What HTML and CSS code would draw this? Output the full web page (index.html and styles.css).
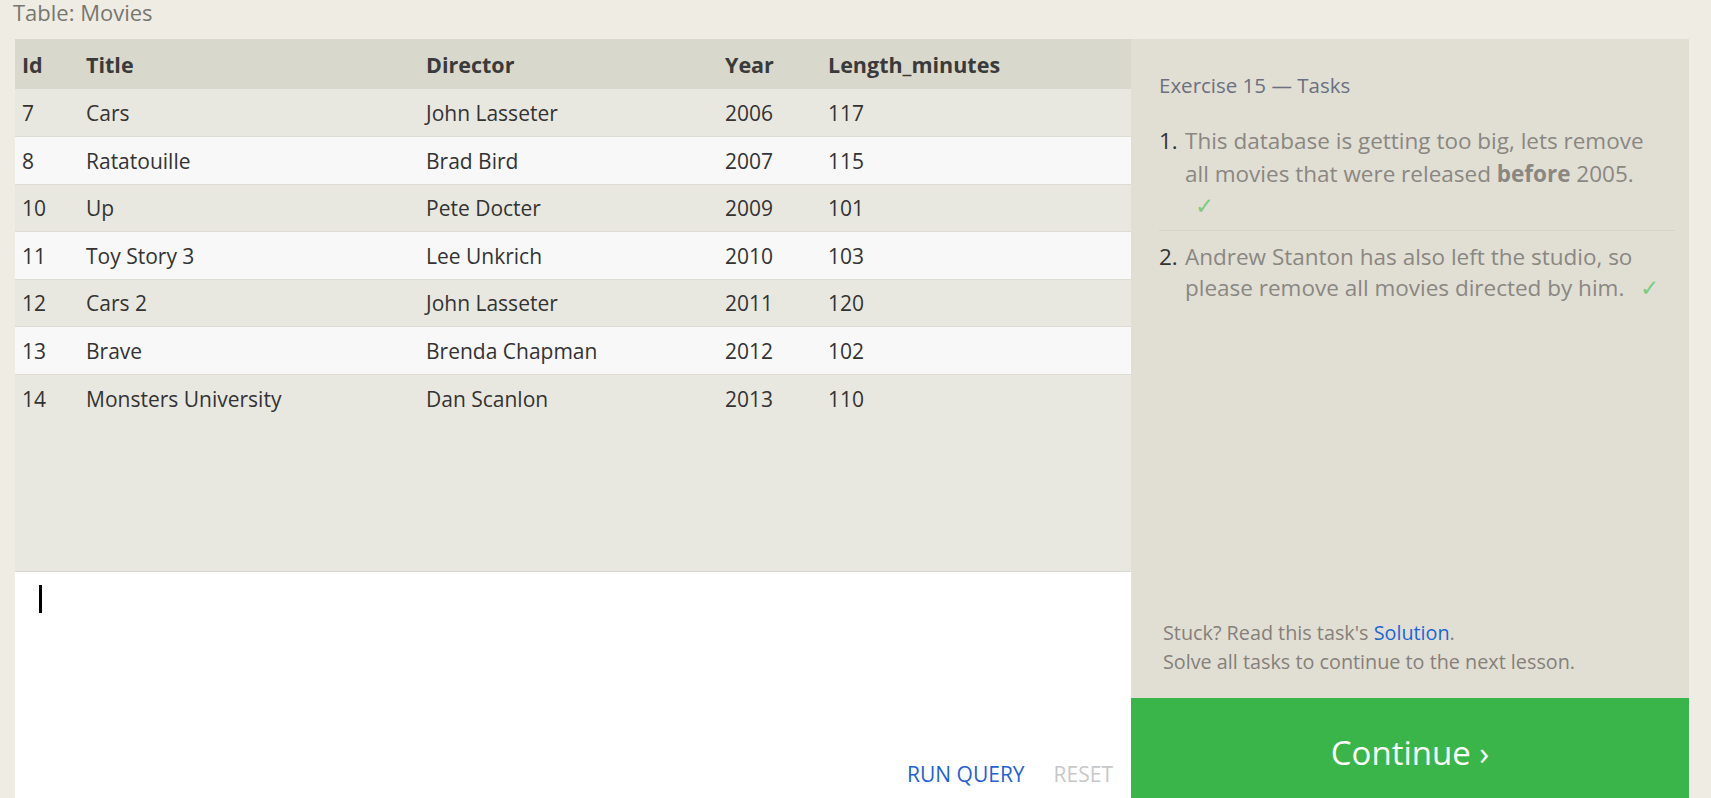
FILE: index.html
```html
<!DOCTYPE html>
<html>
<head>
<meta charset="utf-8">
<link rel="stylesheet" href="styles.css">
</head>
<body>
<div class="caption">Table: Movies</div>
<div class="workspace">
  <div class="left">
    <div class="results">
      <table class="grid">
        <thead>
          <tr><th class="c-id">Id</th><th class="c-title">Title</th><th class="c-dir">Director</th><th class="c-year">Year</th><th>Length_minutes</th></tr>
        </thead>
        <tbody>
          <tr><td>7</td><td>Cars</td><td>John Lasseter</td><td>2006</td><td>117</td></tr>
          <tr><td>8</td><td>Ratatouille</td><td>Brad Bird</td><td>2007</td><td>115</td></tr>
          <tr><td>10</td><td>Up</td><td>Pete Docter</td><td>2009</td><td>101</td></tr>
          <tr><td>11</td><td>Toy Story 3</td><td>Lee Unkrich</td><td>2010</td><td>103</td></tr>
          <tr><td>12</td><td>Cars 2</td><td>John Lasseter</td><td>2011</td><td>120</td></tr>
          <tr><td>13</td><td>Brave</td><td>Brenda Chapman</td><td>2012</td><td>102</td></tr>
          <tr><td>14</td><td>Monsters University</td><td>Dan Scanlon</td><td>2013</td><td>110</td></tr>
        </tbody>
      </table>
    </div>
    <div class="editor">
      <div class="code"><span class="cursor"></span></div>
      <div class="actions">
        <span class="run">RUN QUERY</span>
        <span class="reset">RESET</span>
      </div>
    </div>
  </div>
  <div class="right">
    <div class="tasks">
      <div class="tasks-title">Exercise 15 — Tasks</div>
      <ol class="task-list">
        <li class="task"><span class="num">1.</span><span class="txt">This database is getting too big, lets remove<br>all movies that were released <b>before</b> 2005.<br><span class="check check-wrap">✓</span></span></li>
        <li class="task"><span class="num">2.</span><span class="txt">Andrew Stanton has also left the studio, so<br>please remove all movies directed by him. <span class="check">✓</span></span></li>
      </ol>
    </div>
    <div class="help">
      <div>Stuck? Read this task's <span class="link">Solution</span>.</div>
      <div>Solve all tasks to continue to the next lesson.</div>
    </div>
    <div class="continue">Continue ›</div>
  </div>
</div>
</body>
</html>
```
FILE: styles.css
```css
html, body {
  margin: 0;
  padding: 0;
  height: 100%;
  overflow: hidden;
}
body {
  background: #efece4;
  font-family: "Open Sans", "Noto Sans", sans-serif;
  color: #333;
}
.caption {
  height: 39px;
  padding-left: 13px;
  font-size: 22px;
  line-height: 24px;
  color: #777770;
}
.workspace {
  display: flex;
  margin-left: 15px;
  width: 1674px;
  height: 759px;
}
.left {
  width: 1116px;
  display: flex;
  flex-direction: column;
}
.results {
  height: 532px;
  background: #e9e8e0;
  border-bottom: 1px solid #dcdad0;
}
.grid {
  width: 100%;
  border-collapse: collapse;
  font-size: 21px;
}
.grid th {
  background: #d9d8cc;
  height: 50px;
  text-align: left;
  font-weight: 700;
  font-size: 21.5px;
  color: #3a3a3a;
  padding: 0 0 0 7px;
}
.grid td {
  height: 47.5px;
  padding: 1px 0 0 7px;
  border-bottom: 1px solid #dedcd3;
  color: #333;
  box-sizing: border-box;
}
.grid tbody tr:nth-child(even) td {
  background: #f8f8f8;
}
.grid tbody tr:last-child td {
  border-bottom: none;
}
.c-id { width: 57px; }
.c-title { width: 333px; }
.c-dir { width: 292px; }
.c-year { width: 96px; }
.editor {
  flex: 1;
  background: #fff;
  display: flex;
  flex-direction: column;
}
.code {
  flex: 1;
  padding: 13px 0 0 24px;
}
.cursor {
  display: block;
  width: 2.5px;
  height: 28px;
  background: #000;
}
.actions {
  display: flex;
  justify-content: flex-end;
  gap: 29px;
  padding: 0 18px 10px 0;
  font-size: 21px;
  line-height: 28px;
}
.run { color: #1f62d6; }
.reset { color: #c8c8c8; }
.right {
  width: 558px;
  background: #e1dfd4;
  display: flex;
  flex-direction: column;
}
.tasks {
  flex: 1;
  padding: 33px 14px 0 28px;
}
.tasks-title {
  font-size: 20.5px;
  color: #6b7080;
  line-height: 26px;
  margin-bottom: 27px;
}
.task-list {
  list-style: none;
  margin: 0;
  padding: 0;
}
.task {
  display: flex;
  font-size: 22.5px;
  line-height: 32.5px;
  color: #8a8782;
  padding-bottom: 7px;
}
.task + .task {
  border-top: 1px solid #d6d4c8;
  padding-top: 10px;
  line-height: 31px;
}
.num {
  width: 26px;
  flex: none;
  color: #333;
}
.txt {
  white-space: nowrap;
}
.txt b { font-weight: 700; }
.check {
  color: #7bcb80;
  margin-left: 10px;
}
.check-wrap {
  display: inline-block;
  margin-left: 10px;
}
.help {
  padding: 0 20px 22px 32px;
  font-size: 19.8px;
  line-height: 29px;
  color: #85807a;
}
.link { color: #1a66d4; }
.continue {
  height: 100px;
  box-sizing: border-box;
  padding-top: 9px;
  background: #3ab54a;
  color: #fff;
  font-size: 33px;
  display: flex;
  align-items: center;
  justify-content: center;
}
```
